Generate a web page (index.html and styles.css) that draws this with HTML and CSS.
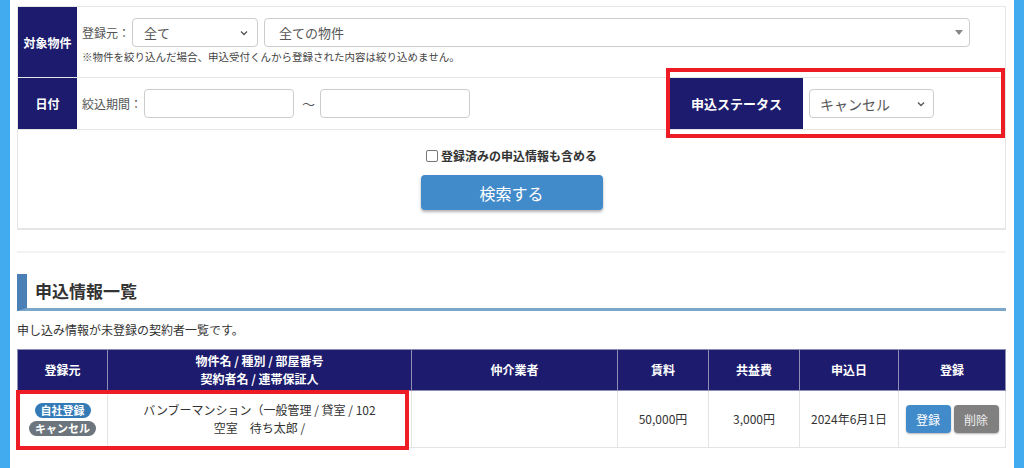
FILE: index.html
```html
<!DOCTYPE html>
<html lang="ja">

<head>
    <meta charset="UTF-8">
    <meta name="viewport" content="width=device-width, initial-scale=1.0">
    <title>申込情報一覧</title>
    <link rel="stylesheet" href="styles.css">
</head>

<body>
    <div id="page">

        <!-- search panel -->
        <div class="panel">
            <div class="row row-target">
                <div class="row-head">対象物件</div>
                <div class="row-body">
                    <div class="line">
                        <span class="label">登録元：</span>
                        <div class="select select-source">
                            <span>全て</span>
                            <svg class="chevron" width="8" height="6" viewBox="0 0 8 6"><path d="M1 1.5 L4 4.5 L7 1.5" fill="none" stroke="#555" stroke-width="1.3"/></svg>
                        </div>
                        <div class="select select-property">
                            <span>全ての物件</span>
                            <svg class="caret" width="8" height="5" viewBox="0 0 8 5"><path d="M0 0 H8 L4 5 Z" fill="#888"/></svg>
                        </div>
                    </div>
                    <p class="note">※物件を絞り込んだ場合、申込受付くんから登録された内容は絞り込めません。</p>
                </div>
            </div>

            <div class="row row-date">
                <div class="row-head">日付</div>
                <div class="row-body date-body">
                    <span class="label">絞込期間：</span>
                    <div class="input"></div>
                    <span class="tilde">～</span>
                    <div class="input"></div>
                </div>
                <div class="row-head status-head">申込ステータス</div>
                <div class="row-body status-body">
                    <div class="select select-status">
                        <span>キャンセル</span>
                        <svg class="chevron" width="8" height="6" viewBox="0 0 8 6"><path d="M1 1.5 L4 4.5 L7 1.5" fill="none" stroke="#555" stroke-width="1.3"/></svg>
                    </div>
                </div>
            </div>

            <div class="row-actions">
                <label class="check"><span class="box"></span>登録済みの申込情報も含める</label>
                <button class="btn-search">検索する</button>
            </div>

            <!-- annotation -->
            <div class="mark mark-status"></div>
        </div>

        <div class="separator"></div>

        <!-- list -->
        <h2 class="section-title">申込情報一覧</h2>
        <p class="desc">申し込み情報が未登録の契約者一覧です。</p>

        <div class="table-wrap">
            <table class="list">
                <thead>
                    <tr>
                        <th class="c-src">登録元</th>
                        <th class="c-name">物件名 / 種別 / 部屋番号<br>契約者名 / 連帯保証人</th>
                        <th class="c-agent">仲介業者</th>
                        <th class="c-rent">賃料</th>
                        <th class="c-fee">共益費</th>
                        <th class="c-date">申込日</th>
                        <th class="c-reg">登録</th>
                    </tr>
                </thead>
                <tbody>
                    <tr>
                        <td>
                            <span class="badge badge-blue">自社登録</span><br>
                            <span class="badge badge-gray">キャンセル</span>
                        </td>
                        <td>バンブーマンション（一般管理 / 貸室 / 102<br>空室　待ち太郎 /</td>
                        <td></td>
                        <td>50,000円</td>
                        <td>3,000円</td>
                        <td>2024年6月1日</td>
                        <td>
                            <button class="btn-small btn-blue">登録</button><button class="btn-small btn-gray">削除</button>
                        </td>
                    </tr>
                </tbody>
            </table>
            <div class="mark mark-row"></div>
        </div>

    </div>
</body>

</html>
```

FILE: styles.css
```css
html {
    background-color: #42aaef;
}

body {
    margin: 0 10px;
    min-height: 468px;
    background-color: #fff;
    font-family: "Noto Sans CJK JP", "Noto Sans", sans-serif;
    color: #333;
}

#page {
    padding: 6px 8px 0 7px;
}

/* search panel */

.panel {
    position: relative;
    border: 1px solid #e6e6e6;
    border-bottom-width: 2px;
}

.row {
    display: flex;
    border-bottom: 1px solid #e6e6e6;
}

.row-target {
    height: 70px;
}

.row-date {
    height: 51px;
}

.row-head {
    width: 59px;
    flex: none;
    display: flex;
    align-items: center;
    justify-content: center;
    background-color: #1c1b6d;
    color: #fff;
    font-size: 12px;
    font-weight: bold;
}

.row-body {
    flex: 1;
    padding: 11px 0 0 5px;
    font-size: 12px;
    color: #555;
}

.line {
    display: flex;
    align-items: center;
}

.label {
    margin-right: 2px;
}

.select {
    display: flex;
    align-items: center;
    justify-content: space-between;
    box-sizing: border-box;
    height: 29px;
    border: 1px solid #ccc;
    border-radius: 4px;
    background: #fff;
    font-size: 13px;
    color: #555;
}

.select-source {
    width: 126px;
    padding: 0 9px 0 11px;
}

.select-property {
    width: 706px;
    margin-left: 6px;
    padding: 0 6px 0 14px;
}

.select-status {
    width: 125px;
    padding: 0 8px 0 10px;
    font-size: 14px;
}

.note {
    margin: 2px 0 0;
    font-size: 10.5px;
    color: #444;
}

.date-body {
    display: flex;
    align-items: center;
    padding-top: 0;
}

.input {
    box-sizing: border-box;
    width: 150px;
    height: 29px;
    border: 1px solid #ccc;
    border-radius: 4px;
}

.tilde {
    margin: 0 5px 0 8px;
    font-size: 13px;
}

.status-head {
    width: 133px;
    font-size: 13px;
}

.status-body {
    flex: none;
    width: 196px;
    display: flex;
    align-items: center;
    padding: 0 0 0 6px;
}

.row-actions {
    display: flex;
    flex-direction: column;
    align-items: center;
    height: 98px;
}

.check {
    display: flex;
    align-items: center;
    margin-top: 17px;
    font-size: 12px;
    font-weight: bold;
    color: #333;
}

.box {
    width: 10px;
    height: 10px;
    margin-right: 3px;
    border: 1px solid #777;
    border-radius: 2px;
}

.btn-search {
    width: 182px;
    height: 35px;
    margin-top: 11px;
    border: 0;
    border-radius: 4px;
    background-color: #428bca;
    color: #fff;
    font-family: inherit;
    font-size: 16px;
    box-shadow: 0 2px 3px rgba(0, 0, 0, 0.3);
}

/* red annotation boxes */

.mark {
    position: absolute;
    box-sizing: border-box;
    border: 4px solid #ee1c25;
}

.mark-status {
    left: 648px;
    top: 61px;
    width: 339px;
    height: 70px;
}

.separator {
    height: 2px;
    margin-top: 21px;
    background-color: #f3f3f3;
}

/* list */

.section-title {
    margin: 21px 0 0;
    padding: 4px 0 5px 8px;
    border-left: 10px solid #4a80b6;
    border-bottom: 3px solid #7ba6cc;
    font-size: 17px;
    line-height: 25px;
    color: #333;
}

.desc {
    margin: 12px 0 12px;
    font-size: 12px;
    line-height: 14px;
}

.table-wrap {
    position: relative;
}

.list {
    width: 100%;
    table-layout: fixed;
    border-collapse: collapse;
    font-size: 12px;
    text-align: center;
}

.list th {
    height: 40px;
    padding: 0;
    background-color: #1c1b6d;
    border: 1px solid #8d8db5;
    color: #fff;
    font-size: 12px;
    line-height: 18px;
}

.list td {
    height: 56px;
    padding: 0;
    border: 1px solid #e4e4e4;
    line-height: 18px;
    color: #333;
}

.c-src { width: 89px; }
.c-name { width: 303px; }
.c-agent { width: 205px; }
.c-rent { width: 90px; }
.c-fee { width: 90px; }
.c-date { width: 98px; }

.badge {
    display: inline-block;
    padding: 0 6px;
    border-radius: 8px;
    color: #fff;
    font-size: 11px;
    font-weight: bold;
    line-height: 15px;
}

.badge-blue {
    background-color: #337ab7;
}

.badge-gray {
    background-color: #6c757d;
    margin-top: 2px;
}

.btn-small {
    width: 45px;
    height: 28px;
    padding: 0;
    border: 0;
    border-radius: 4px;
    color: #fff;
    font-family: inherit;
    font-size: 12px;
    box-shadow: 0 1px 2px rgba(0, 0, 0, 0.3);
}

.btn-blue {
    background-color: #428bca;
}

.btn-gray {
    margin-left: 3px;
    background-color: #808080;
    color: #eee;
}

.mark-row {
    left: -1px;
    top: 41px;
    width: 393px;
    height: 60px;
}
```
